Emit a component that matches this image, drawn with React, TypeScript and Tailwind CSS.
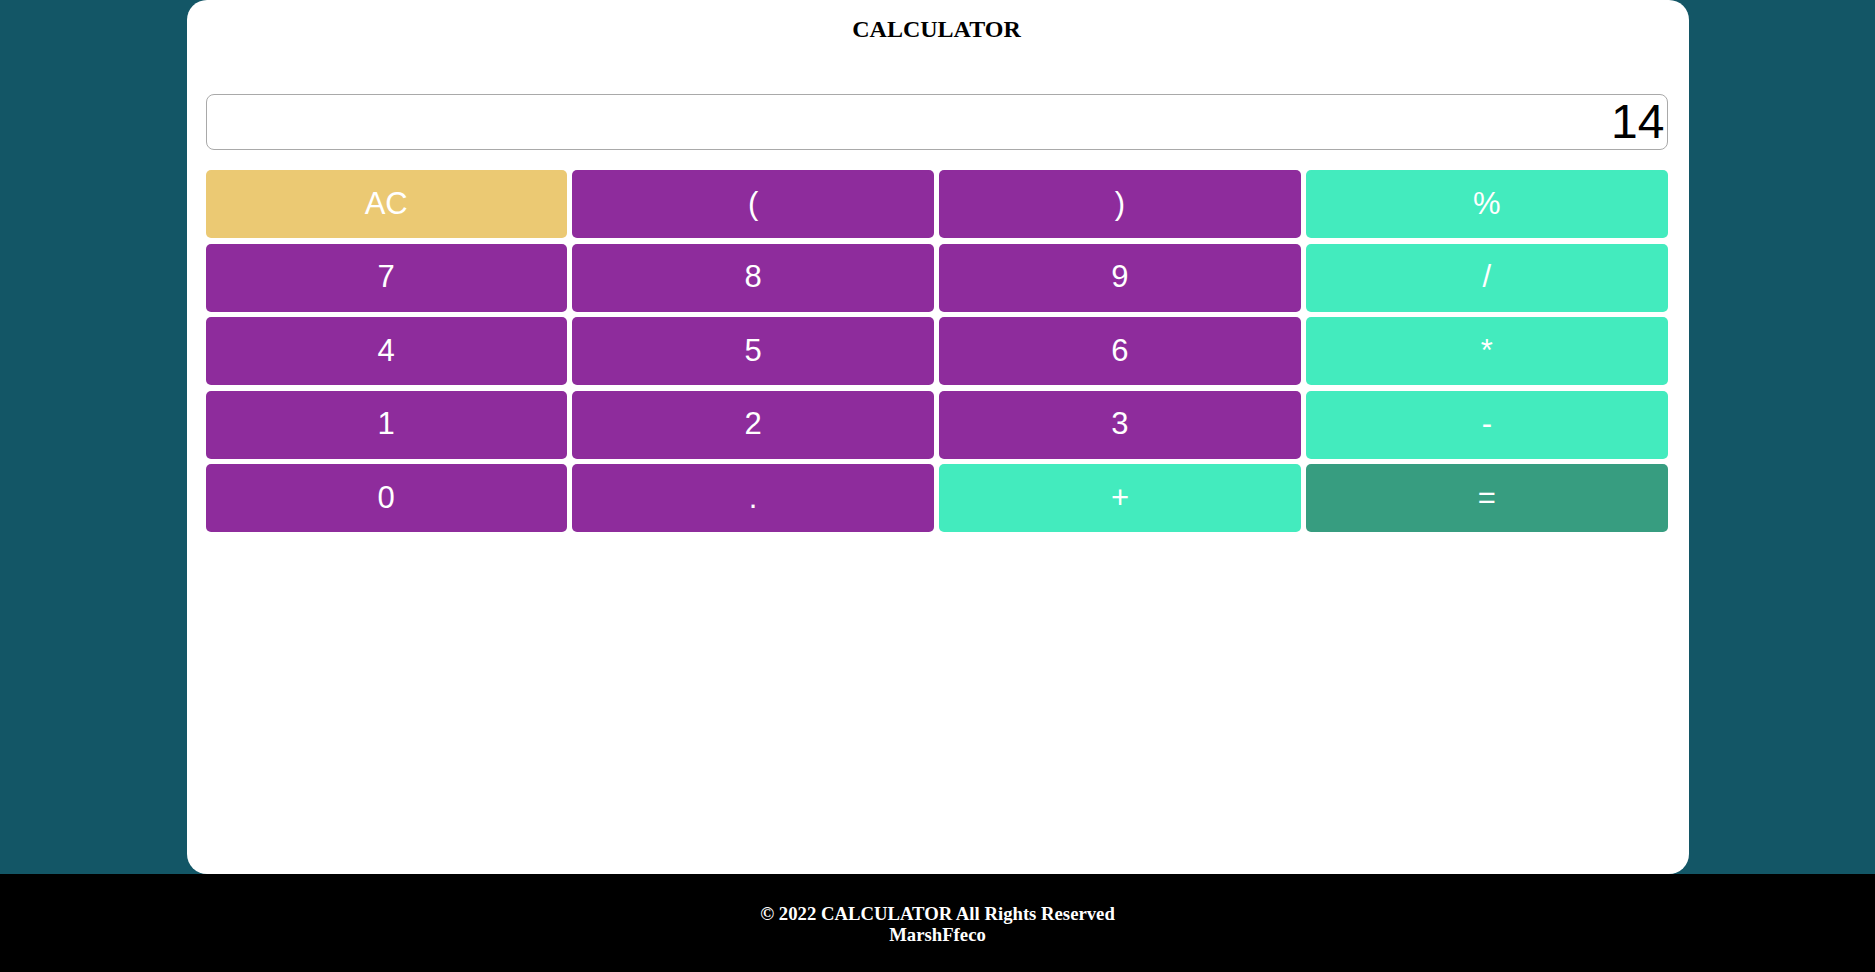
import React from 'react';

type Key = { label: string; tone: 'ac' | 'num' | 'op' | 'eq' };

const KEYS: Key[] = [
  { label: 'AC', tone: 'ac' },
  { label: '(', tone: 'num' },
  { label: ')', tone: 'num' },
  { label: '%', tone: 'op' },
  { label: '7', tone: 'num' },
  { label: '8', tone: 'num' },
  { label: '9', tone: 'num' },
  { label: '/', tone: 'op' },
  { label: '4', tone: 'num' },
  { label: '5', tone: 'num' },
  { label: '6', tone: 'num' },
  { label: '*', tone: 'op' },
  { label: '1', tone: 'num' },
  { label: '2', tone: 'num' },
  { label: '3', tone: 'num' },
  { label: '-', tone: 'op' },
  { label: '0', tone: 'num' },
  { label: '.', tone: 'num' },
  { label: '+', tone: 'op' },
  { label: '=', tone: 'eq' },
];

const toneClass: Record<Key['tone'], string> = {
  ac: 'bg-[#ebc973]',
  num: 'bg-[#8e2c9c]',
  op: 'bg-[#43ebbe]',
  eq: 'bg-[#379d80]',
};

export default function App() {
  return (
    <div className="flex flex-col min-h-screen">
      <main className="bg-[#135666] h-[874px] flex-shrink-0">
        <div className="w-[1502px] mx-auto h-full bg-white rounded-[20px] pt-[14.5px] pl-[19px] pr-[21px]">
          <h2 className="text-center text-[24px] leading-[28px] font-bold text-black font-['Liberation_Serif',serif]">
            CALCULATOR
          </h2>

          <div className="mt-[51px] h-[56px] border border-[#a9a9a9] rounded-lg px-[2px] text-right text-[48px] leading-[54px] text-black font-['Liberation_Sans',Arial,sans-serif]">
            14
          </div>

          <div className="mt-[20.5px] grid grid-cols-4 gap-x-[5.5px] gap-y-[5.5px]">
            {KEYS.map((k) => (
              <button
                key={k.label}
                className={`h-[68px] rounded-[5px] flex items-center justify-center text-white text-[31px] font-['Liberation_Sans',Arial,sans-serif] ${toneClass[k.tone]}`}
              >
                {k.label}
              </button>
            ))}
          </div>
        </div>
      </main>

      <footer className="bg-black h-[98px] pt-[28.5px] text-center text-white font-bold text-[18.72px] leading-[21.5px] font-['Liberation_Serif',serif]">
        <div>© 2022 CALCULATOR All Rights Reserved</div>
        <div>MarshFfeco</div>
      </footer>
    </div>
  );
}
